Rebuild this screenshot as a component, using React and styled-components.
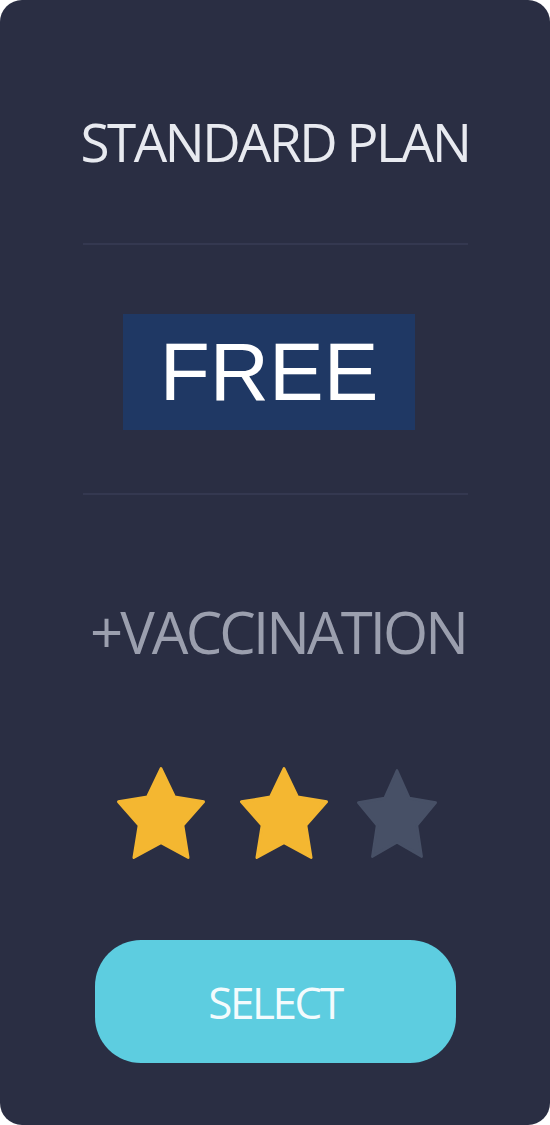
import React from "react";
import styled, { createGlobalStyle } from "styled-components";

const Global = createGlobalStyle`
  html, body { margin: 0; padding: 0; background: #ffffff; }
  * { box-sizing: border-box; }
`;

const Card = styled.div`
  width: 550px;
  height: 1125px;
  background: #2a2e43;
  border-radius: 22px;
  display: flex;
  flex-direction: column;
  align-items: center;
  padding-top: 115px;
  font-family: "Open Sans", "Noto Sans", sans-serif;
`;

const Title = styled.h1`
  margin: 0;
  font-size: 53px;
  line-height: 53px;
  font-weight: 400;
  letter-spacing: -2.5px;
  color: #e8eaf0;
  white-space: nowrap;
`;

const Divider = styled.hr`
  width: 385px;
  height: 2px;
  border: 0;
  margin: ${(p) => p.$top}px 0 0 0;
  background: #343850;
`;

const Price = styled.div`
  margin-top: 69px;
  width: 292px;
  height: 116px;
  background: #1f3864;
  display: flex;
  align-items: center;
  justify-content: center;
  transform: translateX(-6px);
  font-family: "Liberation Sans", Arial, sans-serif;
  font-size: 82px;
  line-height: 1;
  color: #ffffff;
`;

const Feature = styled.div`
  margin-top: 108px;
  font-size: 58px;
  line-height: 58px;
  letter-spacing: -2.9px;
  color: #9b9fae;
  white-space: nowrap;
  transform: translateX(3px);
`;

const Stars = styled.div`
  margin-top: 105px;
  height: 94px;
  display: flex;
  align-items: center;
  transform: translateX(2px);
`;

const StarSvg = styled.svg`
  display: block;
  overflow: visible;
  margin-left: ${(p) => p.$gap}px;
  fill: ${(p) => (p.$on ? "#f4b731" : "#475066")};
  stroke: ${(p) => (p.$on ? "#f4b731" : "#475066")};
  stroke-width: 3;
  stroke-linejoin: round;
`;

const Button = styled.button`
  margin-top: 80px;
  width: 361px;
  height: 123px;
  border: 0;
  border-radius: 46px;
  background: #5dcde0;
  color: #f3fbfd;
  font-family: "Open Sans", "Noto Sans", sans-serif;
  font-size: 44px;
  letter-spacing: -2.4px;
  cursor: pointer;
`;

function Star({ on, w, h, gap = 0 }) {
  return (
    <StarSvg $on={on} $gap={gap} width={w} height={h} viewBox="0 0 100 96" preserveAspectRatio="none">
      <path d="M50 1.5 L65.5 31.3 L98.5 36.3 L75 60.7 L80.9 94.5 L50 78.9 L19.1 94.5 L25 60.7 L1.5 36.3 L34.5 31.3 Z" />
    </StarSvg>
  );
}

export default function App() {
  return (
    <>
      <Global />
      <Card>
        <Title>STANDARD PLAN</Title>
        <Divider $top={75} />
        <Price>FREE</Price>
        <Divider $top={63} />
        <Feature>+VACCINATION</Feature>
        <Stars>
          <Star on w={88} h={92} />
          <Star on w={88} h={92} gap={35} />
          <Star w={80} h={89} gap={29} />
        </Stars>
        <Button>SELECT</Button>
      </Card>
    </>
  );
}
